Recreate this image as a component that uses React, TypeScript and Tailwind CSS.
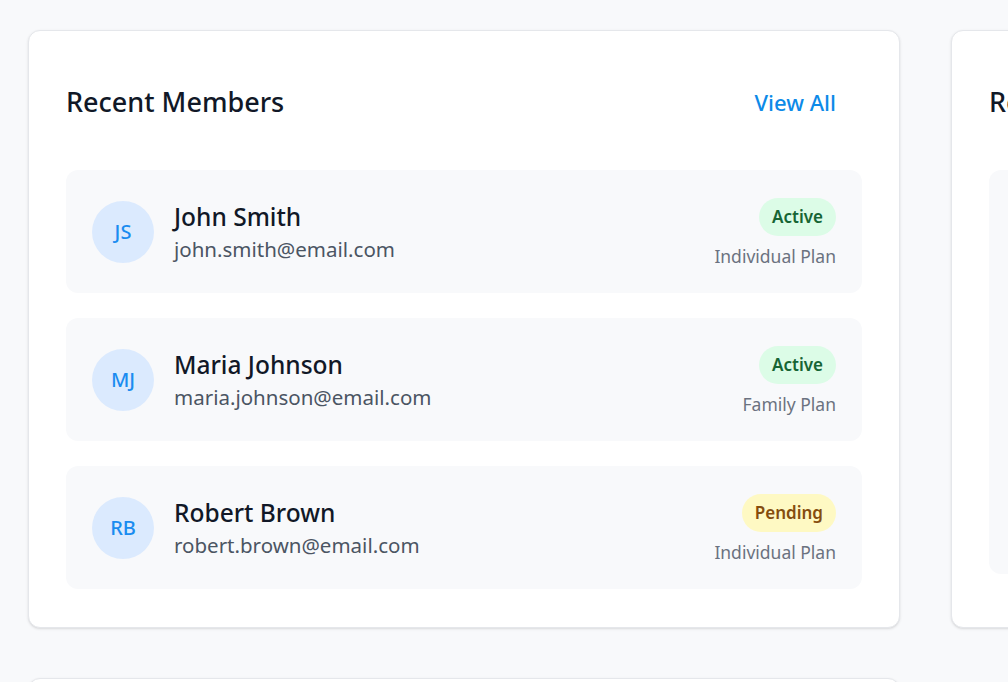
const members = [
  { initials: "JS", name: "John Smith", email: "john.smith@email.com", status: "Active", plan: "Individual Plan" },
  { initials: "MJ", name: "Maria Johnson", email: "maria.johnson@email.com", status: "Active", plan: "Family Plan" },
  { initials: "RB", name: "Robert Brown", email: "robert.brown@email.com", status: "Pending", plan: "Individual Plan" },
];

const App = () => {
  return (
    <div
      className="w-[1008px] h-[682px] overflow-hidden bg-[#f8f9fb] pl-[28px] pt-[30px]"
      style={{ fontFamily: '"Noto Sans", "Open Sans", sans-serif' }}
    >
      <div className="flex gap-[51px] w-[1800px]">
        {/* Recent Members */}
        <div className="w-[872px] h-[598px] shrink-0 bg-white border border-[#e5e7eb] rounded-[12px] shadow-sm px-[37px] pt-[37px] pb-[37px]">
          <div className="flex items-center justify-between h-[68px] mb-[34px]">
            <h2 className="text-[27px] font-medium text-[#111827]">Recent Members</h2>
            <a className="text-[22px] font-medium text-[#0d8ae8] pr-[26px]">View All</a>
          </div>

          <div className="flex flex-col gap-[25px]">
            {members.map((m) => (
              <div
                key={m.initials}
                className="h-[123px] bg-[#f8f9fb] rounded-[12px] flex items-center justify-between pl-[26px] pr-[26px]"
              >
                <div className="flex items-center gap-[20px]">
                  <div className="w-[62px] h-[62px] rounded-full bg-[#dbeafe] flex items-center justify-center text-[20px] font-medium text-[#1a8cf0]">
                    {m.initials}
                  </div>
                  <div className="flex flex-col pt-[3px]">
                    <span className="text-[24.5px] font-medium text-[#111827] leading-[32px]">{m.name}</span>
                    <span className="text-[20.5px] text-[#4b5563] leading-[32px]">{m.email}</span>
                  </div>
                </div>
                <div className="flex flex-col items-end gap-[7px] pt-[4px]">
                  <span
                    className={
                      m.status === "Active"
                        ? "h-[38px] px-[13px] rounded-full bg-[#dcfce7] text-[#166534] text-[17px] font-semibold flex items-center"
                        : "h-[38px] px-[13px] rounded-full bg-[#fef9c3] text-[#854d0e] text-[17px] font-semibold flex items-center"
                    }
                  >
                    {m.status}
                  </span>
                  <span className="text-[17.5px] text-[#6b7280] leading-[26px]">{m.plan}</span>
                </div>
              </div>
            ))}
          </div>
        </div>

        {/* Second card, cut off */}
        <div className="w-[872px] h-[598px] shrink-0 bg-white border border-[#e5e7eb] rounded-[12px] shadow-sm px-[37px] pt-[37px]">
          <div className="flex items-center h-[68px] mb-[34px]">
            <h2 className="text-[27px] font-medium text-[#111827]">Recent Payments</h2>
          </div>
          <div className="h-[404px] bg-[#f8f9fb] rounded-[12px]"></div>
        </div>
      </div>

      {/* Next row card, cut off */}
      <div className="mt-[50px] w-[872px] h-[200px] bg-white border border-[#e5e7eb] rounded-[12px] shadow-sm"></div>
    </div>
  );
};

export default App;
